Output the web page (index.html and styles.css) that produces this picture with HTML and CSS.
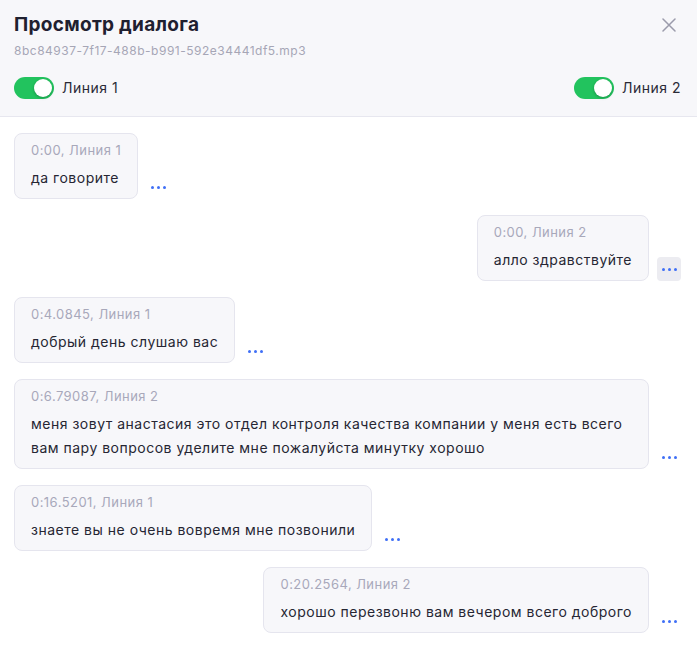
FILE: index.html
```html
<!DOCTYPE html>
<html lang="ru">
<head>
    <meta charset="UTF-8">
    <meta name="viewport" content="width=device-width, initial-scale=1.0">
    <title>Просмотр диалога</title>
    <link rel="stylesheet" href="styles.css">
</head>
<body>
    <div class="dialog">
        <div class="dialog-header">
            <div class="title-row">
                <h1>Просмотр диалога</h1>
                <button class="close-button" aria-label="Закрыть">
                    <svg width="14" height="14" viewBox="0 0 14 14"><path d="M1 1L13 13M13 1L1 13" stroke="#9b9bab" stroke-width="1.5" stroke-linecap="round"/></svg>
                </button>
            </div>
            <div class="file-name">8bc84937-7f17-488b-b991-592e34441df5.mp3</div>
            <div class="lines">
                <label class="line-toggle"><span class="switch"></span>Линия 1</label>
                <label class="line-toggle"><span class="switch"></span>Линия 2</label>
            </div>
        </div>

        <div class="messages">
            <div class="row">
                <div class="bubble">
                    <div class="meta">0:00, Линия 1</div>
                    <div class="text">да говорите</div>
                </div>
                <button class="more"><i></i><i></i><i></i></button>
            </div>
            <div class="row right">
                <div class="bubble">
                    <div class="meta">0:00, Линия 2</div>
                    <div class="text">алло здравствуйте</div>
                </div>
                <button class="more active"><i></i><i></i><i></i></button>
            </div>
            <div class="row">
                <div class="bubble">
                    <div class="meta">0:4.0845, Линия 1</div>
                    <div class="text">добрый день слушаю вас</div>
                </div>
                <button class="more"><i></i><i></i><i></i></button>
            </div>
            <div class="row">
                <div class="bubble">
                    <div class="meta">0:6.79087, Линия 2</div>
                    <div class="text">меня зовут анастасия это отдел контроля качества компании у меня есть всего вам пару вопросов уделите мне пожалуйста минутку хорошо</div>
                </div>
                <button class="more"><i></i><i></i><i></i></button>
            </div>
            <div class="row">
                <div class="bubble">
                    <div class="meta">0:16.5201, Линия 1</div>
                    <div class="text">знаете вы не очень вовремя мне позвонили</div>
                </div>
                <button class="more"><i></i><i></i><i></i></button>
            </div>
            <div class="row right">
                <div class="bubble">
                    <div class="meta">0:20.2564, Линия 2</div>
                    <div class="text">хорошо перезвоню вам вечером всего доброго</div>
                </div>
                <button class="more"><i></i><i></i><i></i></button>
            </div>
        </div>
    </div>
</body>
</html>
```

FILE: styles.css
```css
body {
    margin: 0;
    font-family: Inter, "Noto Sans", Arial, sans-serif;
    background: #ffffff;
    color: #262633;
}
.dialog {
    width: 697px;
}
.dialog-header {
    background: #f7f7fa;
    padding: 13px 16px 17px 14px;
    border-bottom: 1px solid #e7e7ef;
}
.title-row {
    display: flex;
    justify-content: space-between;
    align-items: center;
}
h1 {
    margin: 0;
    font-size: 19px;
    line-height: 24px;
    font-weight: 700;
    letter-spacing: 0.3px;
    color: #1f2030;
}
.close-button {
    width: 24px;
    height: 24px;
    padding: 0;
    border: none;
    background: none;
    display: flex;
    justify-content: center;
    align-items: center;
    cursor: pointer;
}
.file-name {
    margin-top: 6px;
    font-size: 12px;
    line-height: 16px;
    letter-spacing: 0.5px;
    color: #a6a6b6;
}
.lines {
    margin-top: 18px;
    display: flex;
    justify-content: space-between;
    align-items: center;
}
.line-toggle {
    display: flex;
    align-items: center;
    gap: 8px;
    font-size: 14px;
    line-height: 22px;
    letter-spacing: 0.5px;
    color: #2a2a36;
}
.switch {
    position: relative;
    width: 40px;
    height: 22px;
    border-radius: 11px;
    background: #22c35e;
}
.switch::after {
    content: "";
    position: absolute;
    top: 2px;
    right: 2px;
    width: 18px;
    height: 18px;
    border-radius: 50%;
    background: #ffffff;
    box-shadow: 0 1px 3px rgba(0, 0, 0, 0.25);
}
.messages {
    padding: 16px 16px 16px 14px;
    display: flex;
    flex-direction: column;
    gap: 16px;
}
.row {
    display: flex;
    align-items: flex-end;
    gap: 8px;
}
.row.right {
    justify-content: flex-end;
}
.bubble {
    max-width: 603px;
    padding: 6px 16px 8px 16px;
    background: #f7f7fa;
    border: 1px solid #e5e5ee;
    border-radius: 8px;
}
.meta {
    font-size: 13px;
    line-height: 20px;
    letter-spacing: 0.45px;
    color: #a8a8ba;
}
.text {
    margin-top: 6px;
    font-size: 14px;
    line-height: 24px;
    letter-spacing: 0.5px;
    color: #262633;
}
.more {
    flex-shrink: 0;
    width: 24px;
    height: 24px;
    padding: 0;
    border: none;
    border-radius: 4px;
    background: none;
    display: flex;
    justify-content: center;
    align-items: center;
    gap: 3px;
    cursor: pointer;
}
.more.active {
    background: #ececf1;
}
.more i {
    width: 3px;
    height: 3px;
    border-radius: 50%;
    background: #3f6ff6;
}
```
